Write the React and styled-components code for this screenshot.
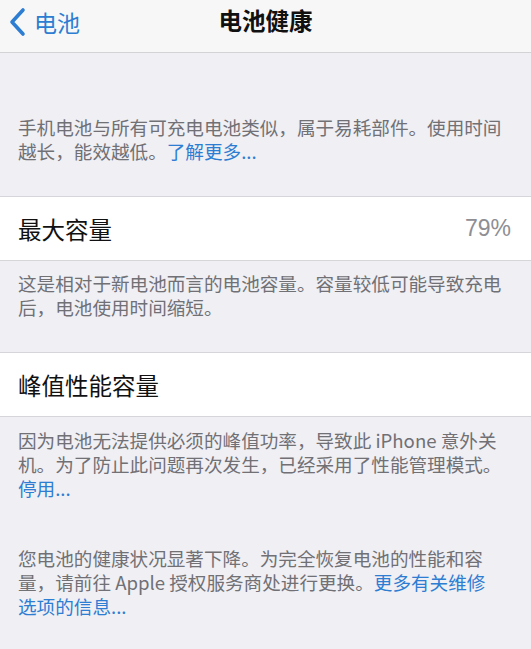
import React from 'react'
import styled, { createGlobalStyle } from 'styled-components'

const GlobalStyle = createGlobalStyle`
  html, body {
    margin: 0;
    padding: 0;
    background: #efeff4;
  }
  body {
    font-family: "Noto Sans CJK SC", "Noto Sans", "Liberation Sans", sans-serif;
    -webkit-font-smoothing: antialiased;
  }
`

const Screen = styled.div`
  width: 531px;
  min-height: 649px;
  background: #efeff4;
  overflow: hidden;
`

const NavBar = styled.header`
  position: relative;
  height: 52px;
  display: flex;
  align-items: center;
  justify-content: center;
  background: #f7f7f8;
  border-bottom: 1px solid #d3d3d6;
`

const BackButton = styled.a`
  position: absolute;
  left: 8px;
  top: 0;
  height: 44px;
  display: flex;
  align-items: center;
  gap: 6px;
  color: #2d7dd2;
  font-size: 23px;
  text-decoration: none;
  cursor: pointer;
`

const Title = styled.h1`
  margin: 0 0 12px;
  font-size: 23.5px;
  font-weight: 700;
  color: #111;
`

const Footer = styled.p`
  margin: 0;
  padding: ${p => p.$pad || '12px 8px 0 18px'};
  font-size: 18.6px;
  line-height: 24px;
  color: #707075;
  white-space: nowrap;
`

const Line = styled.span`
  display: block;
  height: 24px;
`

const Link = styled.span`
  color: #2d7dd2;
`

const Row = styled.div`
  margin-top: ${p => p.$gap || 0}px;
  height: 63px;
  display: flex;
  align-items: center;
  justify-content: space-between;
  padding: 0 20px 0 18px;
  background: #fff;
  border-top: 1px solid #d6d6da;
  border-bottom: 1px solid #d6d6da;
`

const RowLabel = styled.span`
  font-size: 23.5px;
  color: #111;
`

const RowValue = styled.span`
  font-family: "Liberation Sans", "Noto Sans", sans-serif;
  font-size: 23px;
  color: #8e8e93;
`

const Chevron = () => (
  <svg width="20" height="30" viewBox="0 0 20 30">
    <path d="M15 3 L4 15 L15 27" fill="none" stroke="currentColor" strokeWidth="3.6"
      strokeLinecap="round" strokeLinejoin="round" />
  </svg>
)

export default function App() {
  return (
    <Screen>
      <GlobalStyle />
      <NavBar>
        <BackButton>
          <Chevron />
          <span>电池</span>
        </BackButton>
        <Title>电池健康</Title>
      </NavBar>

      <Footer $pad="62px 8px 0 18px">
        <Line>手机电池与所有可充电电池类似，属于易耗部件。使用时间</Line>
        <Line>越长，能效越低。<Link>了解更多...</Link></Line>
      </Footer>

      <Row $gap={33}>
        <RowLabel>最大容量</RowLabel>
        <RowValue>79%</RowValue>
      </Row>

      <Footer $pad="10px 8px 0 18px">
        <Line>这是相对于新电池而言的电池容量。容量较低可能导致充电</Line>
        <Line>后，电池使用时间缩短。</Line>
      </Footer>

      <Row $gap={33}>
        <RowLabel>峰值性能容量</RowLabel>
      </Row>

      <Footer $pad="11px 8px 0 18px">
        <Line>因为电池无法提供必须的峰值功率，导致此 iPhone 意外关</Line>
        <Line>机。为了防止此问题再次发生，已经采用了性能管理模式。</Line>
        <Line><Link>停用...</Link></Line>
      </Footer>

      <Footer $pad="46px 8px 0 18px">
        <Line>您电池的健康状况显著下降。为完全恢复电池的性能和容</Line>
        <Line>量，请前往 Apple 授权服务商处进行更换。<Link>更多有关维修</Link></Line>
        <Line><Link>选项的信息...</Link></Line>
      </Footer>
    </Screen>
  )
}
